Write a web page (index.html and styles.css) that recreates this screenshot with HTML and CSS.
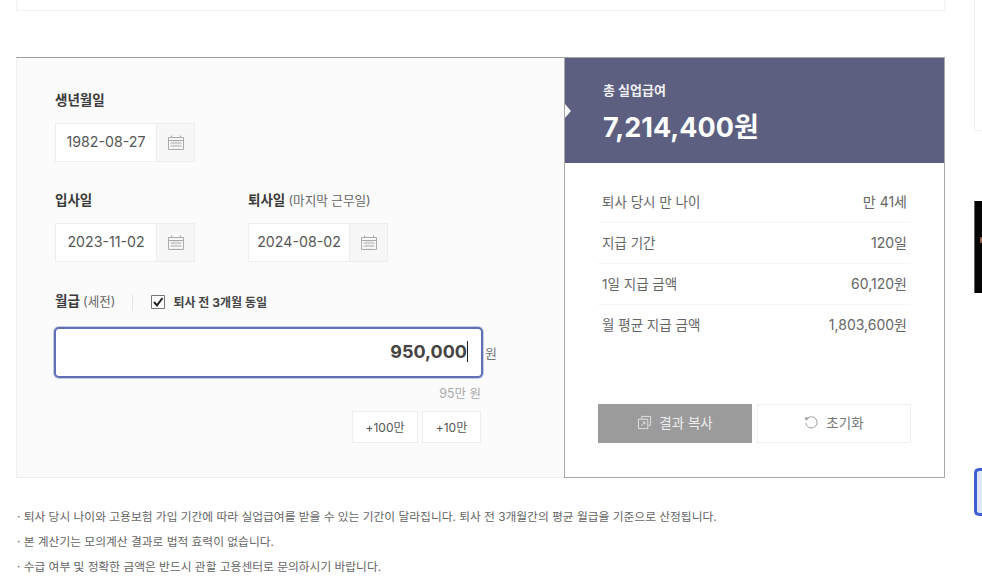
FILE: index.html
```html
<!DOCTYPE html>
<html lang="ko">

<head>
    <meta charset="UTF-8">
    <meta name="viewport" content="width=device-width, initial-scale=1.0">
    <title>실업급여 계산기</title>
    <link rel="stylesheet" href="styles.css">
</head>

<body>
    <div class="page">
        <div class="content">
            <div class="top-card"></div>

            <div class="calc">
                <!-- 입력 영역 -->
                <div class="form">
                    <div class="label">생년월일</div>
                    <div class="date-field">
                        <span class="date-value">1982-08-27</span>
                        <span class="date-btn">
                            <svg class="cal-icon" viewBox="0 0 16 15"><path d="M.5 2.5h15v12H.5zM.5 5.5h15M3.5.5v2M12.5.5v2M2.5 8h11M2.5 11h11" /><path class="dash" d="M5.5 6v8M8 6v8M10.5 6v8" /></svg>
                        </span>
                    </div>

                    <div class="date-row">
                        <div class="date-col">
                            <div class="label">입사일</div>
                            <div class="date-field">
                                <span class="date-value">2023-11-02</span>
                                <span class="date-btn">
                                    <svg class="cal-icon" viewBox="0 0 16 15"><path d="M.5 2.5h15v12H.5zM.5 5.5h15M3.5.5v2M12.5.5v2M2.5 8h11M2.5 11h11" /><path class="dash" d="M5.5 6v8M8 6v8M10.5 6v8" /></svg>
                                </span>
                            </div>
                        </div>
                        <div class="date-col">
                            <div class="label">퇴사일 <small>(마지막 근무일)</small></div>
                            <div class="date-field">
                                <span class="date-value">2024-08-02</span>
                                <span class="date-btn">
                                    <svg class="cal-icon" viewBox="0 0 16 15"><path d="M.5 2.5h15v12H.5zM.5 5.5h15M3.5.5v2M12.5.5v2M2.5 8h11M2.5 11h11" /><path class="dash" d="M5.5 6v8M8 6v8M10.5 6v8" /></svg>
                                </span>
                            </div>
                        </div>
                    </div>

                    <div class="salary-head">
                        <div class="label">월급 <small>(세전)</small></div>
                        <span class="divider"></span>
                        <span class="check">
                            <svg viewBox="0 0 14 14"><path class="box" d="M.5.5h13v13H.5z" /><path class="tick" d="M3 7l3 3.4L11.5 3" /></svg>
                        </span>
                        <span class="check-text">퇴사 전 3개월 동일</span>
                    </div>

                    <div class="salary-row">
                        <div class="salary-input">950,000<i class="caret"></i></div>
                        <span class="unit">원</span>
                    </div>
                    <div class="salary-hint">95만 원</div>
                    <div class="quick">
                        <button class="quick-btn wide">+100만</button>
                        <button class="quick-btn">+10만</button>
                    </div>
                </div>

                <!-- 결과 영역 -->
                <div class="result">
                    <div class="total">
                        <div class="total-label">총 실업급여</div>
                        <div class="total-value">7,214,400원</div>
                    </div>
                    <div class="result-body">
                        <ul class="rows">
                            <li class="row"><span>퇴사 당시 만 나이</span><span class="row-value">만 41세</span></li>
                            <li class="row"><span>지급 기간</span><span class="row-value">120일</span></li>
                            <li class="row"><span>1일 지급 금액</span><span class="row-value">60,120원</span></li>
                            <li class="row"><span>월 평균 지급 금액</span><span class="row-value">1,803,600원</span></li>
                        </ul>
                        <div class="actions">
                            <button class="action copy">
                                <svg viewBox="0 0 16 16"><path d="M5 4V1.5h9.5V11H12M1.5 4.5H11.5V14.5H1.5zM4.5 11.5L8.5 7.5M6 7.5h2.5V10" /></svg>
                                결과 복사
                            </button>
                            <button class="action reset">
                                <svg viewBox="0 0 16 16"><path d="M3.2 4.2A6 6 0 1 1 2 8.5" /><path class="fill" d="M1 2.5L5.5 3 2 6.5z" /></svg>
                                초기화
                            </button>
                        </div>
                    </div>
                </div>
            </div>

            <ul class="notes">
                <li>· 퇴사 당시 나이와 고용보험 가입 기간에 따라 실업급여를 받을 수 있는 기간이 달라집니다. 퇴사 전 3개월간의 평균 월급을 기준으로 산정됩니다.</li>
                <li>· 본 계산기는 모의계산 결과로 법적 효력이 없습니다.</li>
                <li>· 수급 여부 및 정확한 금액은 반드시 관할 고용센터로 문의하시기 바랍니다.</li>
            </ul>
        </div>

        <!-- 오른쪽 광고 -->
        <div class="side">
            <div class="side-box"></div>
            <div class="side-black"><i></i></div>
            <div class="side-blue"></div>
        </div>
    </div>
</body>

</html>
```

FILE: styles.css
```css
* {
    margin: 0;
    padding: 0;
    box-sizing: border-box;
    font-family: Inter, "Noto Sans CJK KR", sans-serif;
}

html,
body {
    height: 583px;
    overflow: hidden;
    background-color: #fff;
}

ul {
    list-style: none;
}

.page {
    display: flex;
    width: 982px;
    padding-left: 16px;
}

.content {
    width: 929px;
    flex-shrink: 0;
}

.top-card {
    height: 11px;
    border: 1px solid #f2f2f2;
    border-top: 0;
}

.calc {
    display: flex;
    height: 421px;
    margin-top: 46px;
}

/* 입력 영역 */
.form {
    width: 548px;
    padding: 32px 0 0 38px;
    background-color: #fbfbfb;
    border: 1px solid #efefef;
    border-top: 1px solid #9d9d9d;
    border-right: 0;
}

.label {
    height: 20px;
    margin-bottom: 13px;
    font-size: 13.5px;
    line-height: 20px;
    font-weight: 700;
    color: #3a3a3a;
}

.label small {
    font-size: 12.6px;
    font-weight: 400;
    color: #666;
}

.date-field {
    display: flex;
    width: 140px;
    height: 39px;
    border: 1px solid #eee;
    background-color: #fff;
}

.date-value {
    width: 100px;
    font-size: 14.2px;
    line-height: 35px;
    text-align: center;
    color: #555;
}

.date-btn {
    display: flex;
    flex: 1;
    align-items: center;
    justify-content: center;
    background-color: #f7f7f7;
    border-left: 1px solid #eee;
}

.cal-icon {
    width: 16px;
    height: 15px;
    fill: none;
    stroke: #aaa;
    stroke-width: 1;
}

.cal-icon .dash {
    stroke: #ccc;
    stroke-dasharray: 1 1.5;
}

.date-row {
    display: flex;
    gap: 53px;
    margin-top: 28px;
}

.salary-head {
    display: flex;
    align-items: center;
    height: 20px;
    margin-top: 29px;
}

.salary-head .label {
    margin-bottom: 0;
}

.divider {
    width: 1px;
    height: 16px;
    margin: 1px 18px 0 17px;
    background-color: #e6e6e6;
}

.check {
    display: flex;
    width: 14px;
    height: 14px;
    margin-right: 8px;
    margin-top: 2px;
}

.check .box {
    fill: #fff;
    stroke: #777;
}

.check .tick {
    fill: none;
    stroke: #222;
    stroke-width: 2;
}

.check-text {
    font-size: 12px;
    font-weight: 700;
    color: #444;
}

.salary-row {
    display: flex;
    align-items: center;
    margin: 16px 0 0 -1px;
}

.salary-input {
    width: 429px;
    height: 51px;
    padding-right: 13px;
    background-color: #fff;
    border: 2px solid #5f70b4;
    border-radius: 5px;
    box-shadow: 0 0 0 1px #c5cbe6;
    font-size: 18px;
    line-height: 46px;
    font-weight: 700;
    text-align: right;
    color: #444;
}

.caret {
    display: inline-block;
    width: 1px;
    height: 21px;
    margin-left: 0;
    vertical-align: -4px;
    background-color: #222;
}

.unit {
    margin-left: 2px;
    font-size: 13px;
    color: #777;
}

.salary-hint {
    width: 426px;
    margin-top: 7px;
    font-size: 12.5px;
    line-height: 18px;
    text-align: right;
    color: #aaa;
}

.quick {
    display: flex;
    justify-content: flex-end;
    gap: 4px;
    width: 426px;
    margin-top: 8px;
}

.quick-btn {
    width: 59px;
    height: 32px;
    padding-bottom: 2px;
    background-color: #fff;
    border: 1px solid #eee;
    font-size: 12px;
    color: #555;
}

.quick-btn.wide {
    width: 66px;
}

/* 결과 영역 */
.result {
    position: relative;
    flex: 1;
    background-color: #fff;
    border: 1px solid #a8a8a8;
}

.total {
    position: relative;
    height: 105px;
    padding: 22px 0 0 38px;
    background-color: #5c5f7f;
    color: #fff;
}

/* 왼쪽 화살표 */
.total::before {
    content: "";
    position: absolute;
    left: 0;
    top: 46px;
    border: 7px solid transparent;
    border-left: 6px solid #fbfbfb;
    border-right: 0;
}

.total-label {
    font-size: 13px;
    line-height: 20px;
    font-weight: 700;
    color: #f0f0f4;
}

.total-value {
    margin-top: 10px;
    font-size: 27px;
    line-height: 36px;
    font-weight: 700;
}

.result-body {
    padding: 19px 33px 0 33px;
}

.rows {
    height: 222px;
}

.row {
    display: flex;
    justify-content: space-between;
    height: 41px;
    padding: 0 4px;
    border-bottom: 1px solid #f6f6f6;
    font-size: 13.5px;
    line-height: 40px;
    color: #666;
}

.row-value {
    font-size: 14px;
}

.row:last-child {
    border-bottom: 0;
}

.actions {
    display: flex;
    gap: 5px;
}

.action {
    display: flex;
    align-items: center;
    justify-content: center;
    gap: 7px;
    width: 154px;
    height: 39px;
    padding-bottom: 3px;
    font-size: 13.5px;
}

.action svg {
    width: 15px;
    height: 15px;
    fill: none;
    stroke-width: 1;
}

.copy {
    background-color: #9b9b9b;
    border: 0;
    color: #eee;
}

.copy svg {
    stroke: #e4e4e4;
}

.reset {
    background-color: #fff;
    border: 1px solid #eee;
    color: #777;
}

.reset svg {
    stroke: #999;
}

.reset svg .fill {
    fill: #999;
    stroke: none;
}

/* 안내 문구 */
.notes {
    margin-top: 27px;
    padding-left: 1px;
}

.notes li {
    height: 25px;
    font-size: 11.75px;
    line-height: 25px;
    color: #666;
}

/* 오른쪽 광고 */
.side {
    flex-shrink: 0;
    width: 8px;
    margin-left: 29px;
}

.side-box {
    height: 131px;
    border: 1px solid #efefef;
    border-right: 0;
    border-top: 0;
}

.side-black {
    position: relative;
    height: 92px;
    margin-top: 70px;
    background-color: #050505;
    border-left: 1px solid #666;
}

.side-black i {
    position: absolute;
    left: 5px;
    top: 36px;
    width: 3px;
    height: 6px;
    background-color: #a5683f;
    border-radius: 2px;
}

.side-blue {
    height: 48px;
    margin-top: 175px;
    background-color: #dfe6f7;
    border: 3px solid #3f5fd0;
    border-right: 0;
    border-radius: 5px 0 0 5px;
}
```
